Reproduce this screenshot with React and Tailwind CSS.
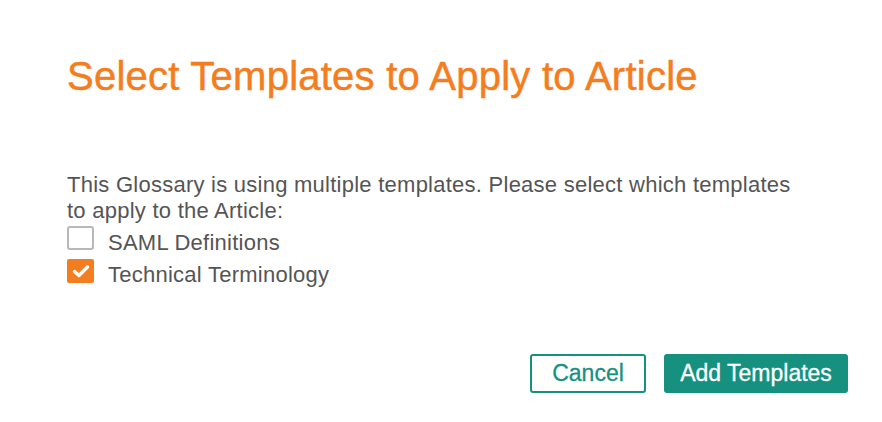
import React, { useState } from 'react';

const CheckRow = ({ label, checked, onToggle }) => (
    <label className="flex items-start h-[32px] cursor-pointer" onClick={onToggle}>
        {checked ? (
            <span className="mt-[3px] w-[27px] h-[24px] rounded-[2px] bg-[#f47d20] flex items-center justify-center">
                <svg width="18" height="14" viewBox="0 0 18 14">
                    <path d="M2.5 7.5 L7 11.5 L15.5 3" fill="none" stroke="#fff" strokeWidth="3.4" strokeLinecap="round" strokeLinejoin="round" />
                </svg>
            </span>
        ) : (
            <span className="mt-[2px] w-[27px] h-[24px] rounded-[3px] border-2 border-[#b8b8b8] bg-white" />
        )}
        <span className="mt-[6px] ml-[14px]">{label}</span>
    </label>
);

const App = () => {
    const [selected, setSelected] = useState({ saml: false, tech: true });

    return (
        <div className="w-[882px] h-[422px] bg-white px-[67px] pt-[52px] font-['Liberation_Sans',Arial,sans-serif]">
            <h1 className="text-[40px] leading-[48px] tracking-[0.25px] text-[#f47d20] [-webkit-text-stroke:0.5px_#f47d20]">
                Select Templates to Apply to Article
            </h1>

            <div className="mt-[72px] text-[22px] leading-[26px] tracking-[0.25px] text-[#555555]">
                <p>This Glossary is using multiple templates. Please select which templates<br />to apply to the Article:</p>
                <CheckRow
                    label="SAML Definitions"
                    checked={selected.saml}
                    onToggle={() => setSelected({ ...selected, saml: !selected.saml })}
                />
                <CheckRow
                    label="Technical Terminology"
                    checked={selected.tech}
                    onToggle={() => setSelected({ ...selected, tech: !selected.tech })}
                />
            </div>

            <div className="flex justify-end gap-[18px] mt-[66px] -mr-[33px]">
                <button className="w-[116px] h-[39px] border-2 border-[#17917f] rounded-[3px] text-[#17917f] text-[23px] [-webkit-text-stroke:0.3px_#17917f]">
                    Cancel
                </button>
                <button className="w-[184px] h-[39px] bg-[#17917f] rounded-[3px] text-white text-[23px] [-webkit-text-stroke:0.3px_#ffffff]">
                    Add Templates
                </button>
            </div>
        </div>
    );
};

export default App;
